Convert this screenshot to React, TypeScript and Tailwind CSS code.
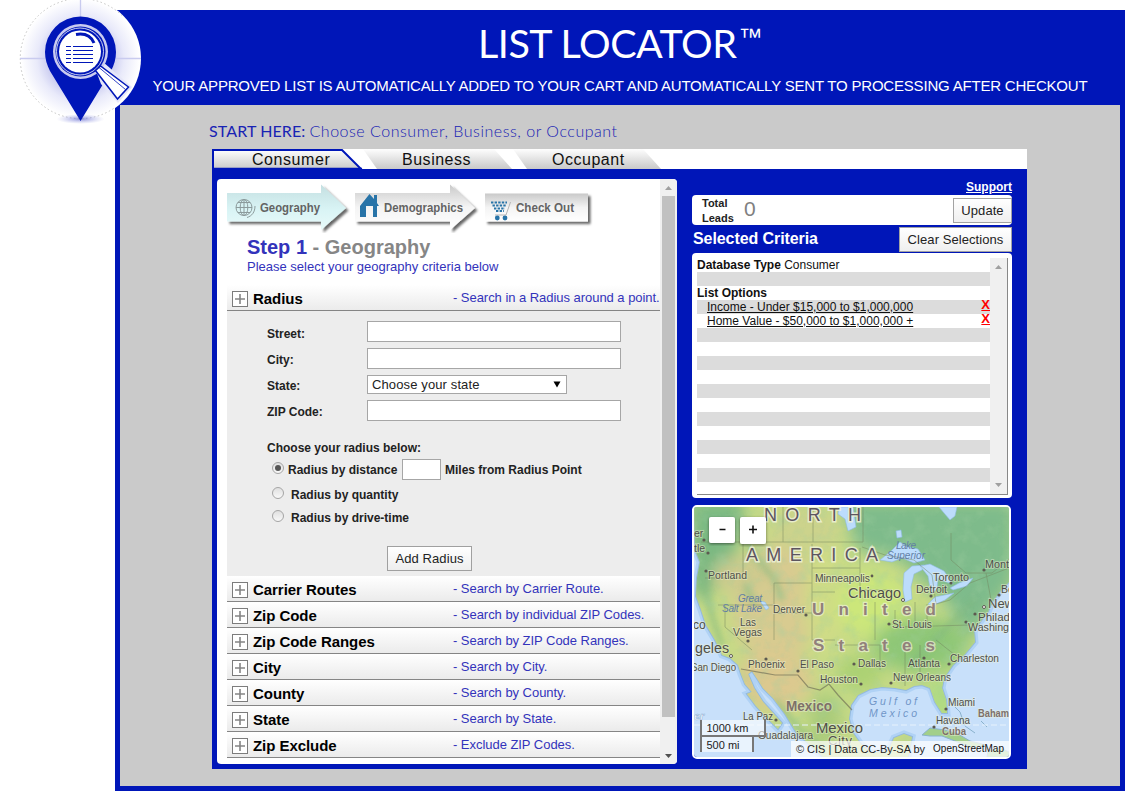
import React from "react";

type Section = { title: string; note: string };

const sections: Section[] = [
  { title: "Carrier Routes", note: "- Search by Carrier Route." },
  { title: "Zip Code", note: "- Search by individual ZIP Codes." },
  { title: "Zip Code Ranges", note: "- Search by ZIP Code Ranges." },
  { title: "City", note: "- Search by City." },
  { title: "County", note: "- Search by County." },
  { title: "State", note: "- Search by State." },
  { title: "Zip Exclude", note: "- Exclude ZIP Codes." },
];

function Logo() {
  return (
    <svg className="absolute left-0 top-0" width="160" height="130" viewBox="0 0 160 130">
      <defs>
        <radialGradient id="halo">
          <stop offset="0.4" stopColor="#b6b8ea" />
          <stop offset="0.72" stopColor="#e9eafa" />
          <stop offset="0.98" stopColor="#ffffff" />
        </radialGradient>
        <radialGradient id="pinShadow">
          <stop offset="0" stopColor="#5a60cc" />
          <stop offset="1" stopColor="#9ea2e6" stopOpacity="0" />
        </radialGradient>
      </defs>
      <circle cx="80.5" cy="58.5" r="60.5" fill="url(#halo)" />
      <path d="M122 15.500A60 60 0 1 0 115 107.500" fill="none" stroke="#c4c4c4" strokeWidth="1" strokeDasharray="1.500 2.500" />
      <path d="M80.500 0V17M20 58.500H46M116 58.500H141" stroke="#c9cbef" strokeWidth="1.300" />
      <ellipse cx="80.500" cy="119" rx="24" ry="5" fill="url(#pinShadow)" opacity="0.700" />
      <path d="M80.500 121L50 71C47 65 45 59 45 52a35.500 35.500 0 0 1 71 0c0 7-2 13-5 19Z" fill="#0016b8" />
      <path d="M95 68L103 62L132 87L118 103L101 84Z" fill="#e6e7f9" />
      <circle cx="80.500" cy="51.500" r="27.500" fill="#c9cbf0" />
      <circle cx="80.500" cy="51.500" r="25" fill="#0016b8" />
      <circle cx="80" cy="51.500" r="23.500" fill="none" stroke="#fff" strokeWidth="0.800" />
      <circle cx="80" cy="51.500" r="21" fill="#fff" />
      <path d="M76 34.500C85 33 91 36 94 43" fill="none" stroke="#0016b8" strokeWidth="3" />
      <path d="M66 46.500h5m2 0h20M66 50.500h5m2 0h20M66 54.500h5m2 0h20M66 58.500h5m2 0h20M66 62.500h5m2 0h20" stroke="#0016b8" strokeWidth="1.200" />
      <path d="M95.500 70.500L100.500 66L128.500 87L117.500 99Z" fill="#fff" stroke="#0016b8" strokeWidth="1.500" />
      <path d="M99 67.500L125.500 89.500" stroke="#0016b8" strokeWidth="0.800" />
    </svg>
  );
}

function Tabs() {
  return (
    <div className="relative h-[20px] bg-white">
      <svg className="absolute left-0 top-0" width="460" height="20" viewBox="0 0 460 20">
        <defs>
          <linearGradient id="tab" x2="0" y2="1">
            <stop offset="0" stopColor="#fefefe" />
            <stop offset="1" stopColor="#c9c9c9" />
          </linearGradient>
        </defs>
        <path d="M1 20V1H130L149 20Z" fill="url(#tab)" stroke="#0016b8" strokeWidth="2" />
        <path d="M0 19.500H150" stroke="#0016b8" strokeWidth="1.500" />
        <path d="M151 0H282L300 20H165Z" fill="url(#tab)" />
        <path d="M301 0H431L449 20H315Z" fill="url(#tab)" />
      </svg>
      <div className="relative flex pt-[1px] text-[16px] leading-[20px] text-[#111]">
        <div className="w-[150px] pl-[40px] tracking-[0.560px]">Consumer</div>
        <div className="w-[150px] pl-[40px] tracking-[0.520px]">Business</div>
        <div className="w-[150px] pl-[40px] tracking-[0.520px]">Occupant</div>
      </div>
    </div>
  );
}

function Steps() {
  return (
    <svg className="block" width="380" height="52" viewBox="222 181 380 52">
      <defs>
        <linearGradient id="teal" x2="0" y2="1">
          <stop offset="0" stopColor="#c4dfe1" />
          <stop offset="0.550" stopColor="#d9f4f5" />
          <stop offset="1" stopColor="#e8fafa" />
        </linearGradient>
        <linearGradient id="grey" x2="0" y2="1">
          <stop offset="0" stopColor="#c9c9c9" />
          <stop offset="0.500" stopColor="#f4f4f4" />
          <stop offset="1" stopColor="#ffffff" />
        </linearGradient>
        <filter id="drop" x="-10%" y="-10%" width="125%" height="135%">
          <feDropShadow dx="2.500" dy="2.500" stdDeviation="1.300" floodColor="#000" floodOpacity="0.600" />
        </filter>
      </defs>
      <path d="M227 193H321V184.500L346 208L321 230V221.500H227Z" fill="url(#teal)" filter="url(#drop)" />
      <path d="M355 193H450V184.500L475 208L450 230V221.500H355Z" fill="url(#grey)" filter="url(#drop)" />
      <path d="M485 193.500H588V221.500H485Z" fill="url(#grey)" filter="url(#drop)" />
      <g fill="none" stroke="#8c9b9c" strokeWidth="1">
        <circle cx="244" cy="207.500" r="8" />
        <ellipse cx="244" cy="207.500" rx="3.800" ry="8" />
        <path d="M244 199V216M236 207.500H252M238 202.500H250M238 212.500H250M247 217.500C252 216 255 212 255 206" />
      </g>
      <path d="M360 206L369.500 194L374 199V195H377V203L379 206H377V217H373V206H366V217H360Z" fill="#2874a8" />
      <path d="M491 202.500H507M492.500 205.500H506M494 208.500H505M496 211H504" stroke="#2874a8" strokeWidth="2.100" strokeDasharray="2.400 1.200" />
      <path d="M510.500 202L506 215H495" fill="none" stroke="#b5b5b5" />
      <circle cx="497.300" cy="218" r="2.400" fill="#2874a8" />
      <circle cx="505" cy="218" r="2.400" fill="#2874a8" />
      <g fontFamily="Liberation Sans, sans-serif" fontWeight="700" fontSize="12" fill="#636363">
        <text x="260" y="212" textLength="60" lengthAdjust="spacingAndGlyphs">Geography</text>
        <text x="384" y="212" textLength="79" lengthAdjust="spacingAndGlyphs">Demographics</text>
        <text x="516" y="212" textLength="58" lengthAdjust="spacingAndGlyphs">Check Out</text>
      </g>
    </svg>
  );
}

function SectionRow({ title, note }: Section) {
  return (
    <div className="flex h-[26px] w-[433px] shrink-0 items-center overflow-hidden whitespace-nowrap border-b border-[#858585] bg-gradient-to-b from-white to-[#ebebeb]">
      <svg className="ml-[5px] mt-[3px] shrink-0" width="16" height="16" viewBox="0 0 16 16">
        <rect x="0.500" y="0.500" width="15" height="15" fill="#fff" stroke="#7c7c7c" />
        <path d="M8 3V13M3 8H13" stroke="#858585" strokeWidth="1.600" />
      </svg>
      <div className="ml-[5px] w-[200px] shrink-0 pt-[2px] text-[15px] font-bold leading-[18px] tracking-[-0.050px] text-black">{title}</div>
      <div className="pt-px text-[13px] tracking-[-0.040px] text-[#3333bb]">{note}</div>
    </div>
  );
}

function Radio({ on = false }: { on?: boolean }) {
  return (
    <span className="flex size-[12px] shrink-0 items-center justify-center rounded-full border border-[#a5a5a5] bg-gradient-to-b from-[#e0e0e0] to-[#f8f8f8]">
      {on && <span className="size-[6px] rounded-full bg-[#555]" />}
    </span>
  );
}

function RadiusForm() {
  const box = "h-[21px] w-[254px] border border-[#a6a6a6] bg-white";
  const label = "w-[100px]";
  return (
    <div className="h-[265px] w-[433px] shrink-0 bg-[#ededed] pl-[40px] pt-[10px] text-[12px] font-bold text-[#222]">
      <div className="flex h-[26px] items-start"><span className={label + " pt-[4px]"}>Street:</span><span className={box} /></div>
      <div className="flex h-[26px] items-start"><span className={label + " pt-[4px]"}>City:</span><span className={box + " mt-px"} /></div>
      <div className="flex h-[26px] items-start">
        <span className={label + " pt-[4px]"}>State:</span>
        <span className="mt-[2px] flex h-[19px] w-[200px] items-center justify-between border border-[#a6a6a6] bg-white pl-[4px] pr-[5px] text-[13px] font-normal text-[#222]">
          <span className="tracking-[0.120px]">Choose your state</span>
          <svg width="8" height="7" viewBox="0 0 8 7"><path d="M0.500 0.500H7.500L4 6.500Z" fill="#000" /></svg>
        </span>
      </div>
      <div className="flex h-[26px] items-start"><span className={label + " pt-[4px]"}>ZIP Code:</span><span className={box + " mt-px"} /></div>
      <div className="mt-[11px] h-[22px] pt-[3px]">Choose your radius below:</div>
      <div className="flex h-[22px] items-center pl-[5px]">
        <span className="-mt-[2px]"><Radio on /></span>
        <span className="ml-[4px] w-[114px] pt-[2px]">Radius by distance</span>
        <span className="h-[21px] w-[39px] border border-[#a6a6a6] bg-white" />
        <span className="ml-[4px] pt-px">Miles from Radius Point</span>
      </div>
      <div className="mt-[2px] flex h-[22px] items-center pl-[5px]"><Radio /><span className="ml-[7px] pt-[4px]">Radius by quantity</span></div>
      <div className="mt-px flex h-[22px] items-center pl-[5px]"><Radio /><span className="ml-[7px] pt-[4px]">Radius by drive-time</span></div>
      <div className="ml-[120px] mt-[19px] flex h-[25px] w-[85px] items-center justify-center border border-[#a0a0a0] bg-gradient-to-b from-white to-[#eee] text-[13px] font-normal tracking-[0.100px] text-[#222]">Add Radius</div>
    </div>
  );
}

function Caret({ down = false, color }: { down?: boolean; color: string }) {
  return (
    <svg className={down ? "rotate-180" : ""} width="7" height="4" viewBox="0 0 7 4"><path d="M0 4L3.500 0L7 4Z" fill={color} /></svg>
  );
}

type Place = [string, number, number, number];
const places: Place[] = [
  ["Portland", 708, 579, 39], ["Minneapolis", 815, 582, 55], ["Denver", 773, 613, 32], ["Toronto", 933, 581, 36],
  ["Detroit", 916, 593, 31], ["St. Louis", 892, 628, 40], ["Las", 740, 626, 16], ["Vegas", 733, 636, 29],
  ["Phoenix", 748, 668, 37], ["El Paso", 800, 668, 34], ["Dallas", 858, 667, 28], ["Atlanta", 908, 667, 32],
  ["Charleston", 950, 662, 49], ["New Orleans", 893, 681, 58], ["Miami", 948, 706, 27], ["Havana", 936, 724, 34],
  ["La Paz", 743, 720, 30], ["Guadalajara", 758, 739, 55], ["San Diego", 691, 671, 45], ["Houston", 820, 683, 38],
];

function Land() {
  return (
    <path d="M694 507H1009V582L1001 590L992 602L988 612L980 622L974 631L975 642L965 654L953 665L944 678L942 688L946 700L947 713L942 713L935 702L930 688L922 685L914 686L906 690L895 688L882 687L870 689L858 695L851 705L849 719L853 733L860 743L870 753L888 751L894 738L904 734L912 737L908 757H823L812 747L796 732L785 714L773 698L763 688L758 680L752 671L748 674L754 688L763 702L774 714L782 723L778 729L768 719L756 706L747 694L752 692L745 684L741 674L738 665L730 658L722 655L715 640L706 625L701 610L696 596L697 578L700 562L695 550Z" />
  );
}

function MapView() {
  return (
    <svg className="block" width="315" height="250" viewBox="694 507 315 250" fontFamily="Liberation Sans, sans-serif">
      <defs>
        <filter id="soft" x="-30%" y="-30%" width="160%" height="160%"><feGaussianBlur stdDeviation="8" /></filter>
        <filter id="soft4" x="-30%" y="-30%" width="160%" height="160%"><feGaussianBlur stdDeviation="3" /></filter>
        <filter id="relief" x="0" y="0" width="100%" height="100%">
          <feTurbulence type="fractalNoise" baseFrequency="0.070" numOctaves="4" seed="7" />
          <feColorMatrix values="0 0 0 0 0.350  0 0 0 0 0.620  0 0 0 0 0.350  2.200 0 0 0 -1" />
        </filter>
        <filter id="btn"><feDropShadow dx="0" dy="1" stdDeviation="1.500" floodOpacity="0.500" /></filter>
        <clipPath id="landClip"><Land /></clipPath>
      </defs>
      <rect x="694" y="507" width="315" height="250" fill="#c8e0fa" />
      <g fill="none" stroke="#b0d2f5" strokeWidth="7"><Land /></g>
      <g fill="none" stroke="#94b9dd" strokeWidth="2"><Land /></g>
      <g fill="#c6da86"><Land /></g>
      <g clipPath="url(#landClip)">
        <g filter="url(#soft)">
          <path d="M690 500H745L735 560L705 600L690 590Z" fill="#7ab983" />
          <path d="M845 500H1015V580L970 640L945 600L900 560L855 548Z" fill="#7ebb8b" />
          <ellipse cx="775" cy="605" rx="42" ry="60" fill="#d8cb90" />
          <ellipse cx="740" cy="575" rx="28" ry="18" fill="#cdca8e" />
          <ellipse cx="775" cy="680" rx="38" ry="30" fill="#dcc98f" />
          <ellipse cx="825" cy="600" rx="20" ry="55" fill="#cfdc86" />
          <ellipse cx="872" cy="605" rx="35" ry="32" fill="#cce77a" />
          <ellipse cx="805" cy="530" rx="35" ry="22" fill="#ccd38c" />
          <ellipse cx="920" cy="645" rx="48" ry="28" fill="#8fc777" />
          <ellipse cx="860" cy="672" rx="22" ry="18" fill="#acd173" />
          <ellipse cx="825" cy="720" rx="16" ry="28" fill="#a9cb7a" />
          <ellipse cx="940" cy="700" rx="14" ry="22" fill="#aedb82" />
        </g>
        <g filter="url(#soft4)" fill="none" stroke="#7fb87f" strokeWidth="5" opacity="0.650">
          <path d="M735 510L745 540L760 562L775 580L782 600M706 545L705 590L713 620L722 645M775 700L800 730L825 750M910 665L940 635L975 600M745 585L755 605" />
        </g>
        <rect x="694" y="507" width="315" height="250" filter="url(#relief)" opacity="0.380" />
      </g>
      <g fill="#a2cf8a" stroke="#8ab2cd" strokeWidth="1">
        <path d="M922 735L930 728L945 730L958 734L970 741L986 745L972 748L955 741L942 736L930 736Z" />
        <path d="M988 751L1000 748L1009 752V757H987Z" />
        <path d="M955 707L960 712L965 726L975 733M981 721L987 727" fill="none" />
      </g>
      <g fill="#bcdcfc" stroke="#8fbce2" strokeWidth="0.600">
        <path d="M880 560L891 551L900 542L906 546L918 549L925 560L914 563L902 558L892 562Z" />
        <path d="M904 573L912 566L924 565L922 570L914 574L911 587L912 599L905 602L903 590Z" />
        <path d="M920 566L930 564L944 571L953 584L943 581L938 578L937 589L931 594L928 576Z" />
        <path d="M950 588L959 583L973 578L967 586L953 590Z" />
        <path d="M928 604L935 597L954 593L945 600L932 606Z" />
        <path d="M939 507H957L955 516L950 520L944 513ZM839 507H853L856 527L848 531L845 519L838 514ZM896 531L901 530L902 537L897 538Z" />
        <path d="M760 601L765 602L769 608L766 610Z" />
      </g>
      <g fill="none" stroke="#74875f" strokeWidth="0.800" opacity="0.600">
        <path d="M701 542H863V507M862 547L885 555L914 560L932 575L936 604L950 600L970 583L1009 568M743 542V573M705 578H743M718 605H774V583H812M812 568H860M812 544V613M725 606V627L752 650M774 605V640M774 613H812V640H835M812 592H835M783 507V542M813 507V542M860 548V595M860 590H892M875 602V640M835 645H880V670M905 640V686M920 645V682M936 640L955 655M900 627L970 625M895 610V625M915 602V623M927 604V622M951 533V560L966 573H992L1009 559M986 573L992 605" />
        <path d="M741 669L775 675H798L808 687L820 690L829 684L838 695L852 710" stroke="#656450" strokeWidth="1.200" />
      </g>
      <path d="M694 725H1009" stroke="#e7f2fc" strokeDasharray="6 3" />
      <g fill="#5d5a50">
        <circle cx="706" cy="571" r="1.600" /><circle cx="872" cy="576" r="1.400" /><circle cx="806" cy="615" r="1.600" /><circle cx="951" cy="583" r="1.600" /><circle cx="931" cy="596" r="1.600" /><circle cx="889" cy="624" r="1.600" /><circle cx="748" cy="641" r="1.600" /><circle cx="766" cy="659" r="1.600" /><circle cx="798" cy="671" r="1.600" /><circle cx="854" cy="664" r="1.600" /><circle cx="924" cy="658" r="1.600" /><circle cx="949" cy="664" r="1.600" /><circle cx="891" cy="683" r="1.600" /><circle cx="861" cy="684" r="1.600" /><circle cx="946" cy="709" r="1.600" /><circle cx="934" cy="727" r="1.600" /><circle cx="776" cy="720" r="1.600" /><circle cx="984" cy="570" r="1.600" /><circle cx="999" cy="595" r="1.600" /><circle cx="975" cy="614" r="1.600" /><circle cx="966" cy="622" r="1.600" /><circle cx="704" cy="540" r="1.600" /><circle cx="708" cy="553" r="1.600" />
      </g>
      <g fill="#fff" stroke="#5d5a50"><circle cx="903" cy="600" r="1.500" /><circle cx="731" cy="656" r="1.500" /><circle cx="984" cy="607" r="1.500" /></g>
      <g stroke="#eef1d8" strokeOpacity="0.450" strokeWidth="1.800" paintOrder="stroke" fill="#4f4f49">
        <g fontSize="18" strokeWidth="3" strokeOpacity="0.850" fill="#5d5560" fontWeight="400">
          <text x="764" y="521" textLength="97">NORTH</text>
          <text x="746" y="561" textLength="132">AMERICA</text>
        </g>
        <g fontSize="17" fontWeight="700" fill="#91807b" strokeWidth="2.500" strokeOpacity="0.700">
          <text x="812" y="615" textLength="124">United</text>
          <text x="813" y="651" textLength="122">States</text>
        </g>
        {places.map(([name, x, y, w]) => (
          <text key={name} x={x} y={y} textLength={w} lengthAdjust="spacingAndGlyphs" fontSize="10.500">{name}</text>
        ))}
        <g fontSize="14">
          <text x="848" y="598" textLength="53" lengthAdjust="spacingAndGlyphs">Chicago</text>
          <text x="695" y="653" textLength="34" lengthAdjust="spacingAndGlyphs">geles</text>
          <text x="988" y="608" fontSize="13">New</text>
        </g>
        <text x="978" y="621" fontSize="11.500">Philad</text>
        <text x="968" y="631" fontSize="10.500" textLength="41" lengthAdjust="spacingAndGlyphs">Washing</text>
        <text x="985" y="568" fontSize="10.500" textLength="24" lengthAdjust="spacingAndGlyphs">Mont</text>
        <text x="1001" y="593" fontSize="10.500">Bo</text>
        <text x="694" y="537" fontSize="10.500">er</text>
        <text x="694" y="552" fontSize="10.500">tle</text>
        <text x="693" y="629" fontSize="12">co</text>
        <g fontWeight="700" fill="#7e7069">
          <text x="786" y="711" fontSize="14" textLength="46" lengthAdjust="spacingAndGlyphs">Mexico</text>
          <text x="978" y="717" fontSize="10.500" textLength="31" lengthAdjust="spacingAndGlyphs">Baham</text>
          <text x="942" y="735" fontSize="10.500" textLength="24" lengthAdjust="spacingAndGlyphs">Cuba</text>
        </g>
        <text x="816" y="733" fontSize="14" textLength="47" lengthAdjust="spacingAndGlyphs">Mexico</text>
        <text x="828" y="745" fontSize="13" textLength="24">City</text>
      </g>
      <g fontStyle="italic" fill="#627ea4" fontSize="10">
        <text x="738" y="602" textLength="24">Great</text><text x="722" y="612" textLength="40">Salt Lake</text>
        <text x="896" y="549" textLength="20">Lake</text><text x="887" y="559" textLength="38">Superior</text>
        <g fill="#7096c8" fontSize="10.500"><text x="869" y="705" textLength="48">Gulf of</text><text x="869" y="717" textLength="48">Mexico</text></g>
        <text x="694" y="720" fontSize="11" fill="#fff" fontWeight="700" stroke="#8caed4" strokeWidth="0.500">er</text>
      </g>
      <rect x="709" y="517" width="26" height="26" rx="2" fill="#fff" filter="url(#btn)" />
      <rect x="740" y="517" width="26" height="27" rx="2" fill="#fff" filter="url(#btn)" />
      <path d="M719.500 529.500H725.500M749 529.500H757M753 525.500V533.500" stroke="#111" strokeWidth="1.600" />
      <rect x="700" y="720" width="65" height="15" fill="#fff" fillOpacity="0.600" />
      <rect x="700" y="736" width="53" height="16" fill="#fff" fillOpacity="0.600" />
      <path d="M701 720V752M700 736H765V720M753 736V752" fill="none" stroke="#777" strokeWidth="2" />
      <g fontSize="11" fill="#222"><text x="706.500" y="732" textLength="42">1000 km</text><text x="706.500" y="749" textLength="33">500 mi</text></g>
      <rect x="791" y="741" width="218" height="16" fill="#fff" fillOpacity="0.720" />
      <g fontSize="11" fill="#222"><text x="796" y="753" textLength="129">© CIS | Data CC-By-SA by</text><text x="933" y="752" fontSize="10" fill="#111" textLength="71">OpenStreetMap</text></g>
    </svg>
  );
}

const actionButton = "flex h-[25px] items-center justify-center whitespace-nowrap border border-[#a3a3a3] bg-gradient-to-b from-white to-[#efefef] text-[13px] tracking-[0.070px] text-[#222]";

function Criterion({ text, striped }: { text: string; striped?: boolean }) {
  return (
    <div className={"flex h-[14px] justify-between pl-[10px] leading-[14px] " + (striped ? "bg-[#dcdcdc]" : "bg-white")}>
      <span className="underline">{text}</span>
      <span className="-mt-[2px] text-[13px] font-bold leading-[14px] text-[#f00] underline">X</span>
    </div>
  );
}

function Summary() {
  return (
    <aside className="ml-[15px] flex w-[320px] flex-col pt-[9px]">
      <a className="h-[17px] self-end text-[12px] font-bold leading-[18px] text-white underline">Support</a>
      <div className="flex h-[30px] items-center rounded-[4px] bg-white">
        <div className="w-[52px] pl-[10px] pt-[2px] text-[11px] font-bold leading-[15px] text-[#222]">Total<br />Leads</div>
        <div className="grow pb-[3px] text-[21px] leading-none text-[#808080]">0</div>
        <div className={actionButton + " w-[59px] mt-px"}>Update</div>
      </div>
      <div className="flex h-[28px] items-start justify-between pt-[2px]">
        <h2 className="pl-px pt-[1px] text-[16px] font-bold leading-[21px] tracking-[-0.080px] text-white">Selected Criteria</h2>
        <div className={actionButton + " w-[113px]"}>Clear Selections</div>
      </div>
      <div className="flex h-[245px] rounded-[4px] bg-white pb-[3px] pl-[5px] pr-[4px] pt-[5px]">
        <div className="flex grow border-b border-r border-[#888]">
          <div className="w-[293px] overflow-hidden text-[12px] leading-[14px] text-[#111]">
            <div className="h-[14px]"><b>Database Type</b> Consumer</div>
            <div className="h-[14px] bg-[#dcdcdc]" />
            <div className="h-[14px] font-bold">List Options</div>
            <Criterion text="Income - Under $15,000 to $1,000,000" striped />
            <Criterion text="Home Value - $50,000 to $1,000,000 +" />
            {Array.from({ length: 11 }, (_, i) => (
              <div key={i} className={"h-[14px] " + (i % 2 ? "bg-white" : "bg-[#dcdcdc]")} />
            ))}
          </div>
          <div className="flex grow flex-col items-center justify-between bg-[#f0f0f0] py-[7px]">
            <Caret color="#a0a0a0" /><Caret down color="#a0a0a0" />
          </div>
        </div>
      </div>
      <div className="mt-[7px] h-[254px] w-[319px] overflow-hidden rounded-[5px] border-2 border-white"><MapView /></div>
    </aside>
  );
}

export default function App() {
  return (
    <div className="relative h-[798px] w-[1148px] overflow-hidden bg-white pl-[115px] pt-[10px] font-['Liberation_Sans',Arial,sans-serif]">
      <main className="flex h-[781px] w-[1010px] flex-col border-x-[5px] border-b-[5px] border-[#0016b8] bg-[#cacaca]">
        <header className="-mx-[5px] h-[95px] shrink-0 bg-[#0016b8] text-center text-white">
          <h1 className="flex h-[66px] items-start justify-center pt-[9px] font-['Lato',sans-serif] text-[39.500px] leading-[48px] tracking-[-0.500px]">
            LIST LOCATOR<span className="ml-[2px] pt-[4px] font-['Liberation_Sans',sans-serif] text-[24px] leading-[28px] tracking-[-0.500px]">™</span>
          </h1>
          <p className="whitespace-nowrap text-[15px] leading-[20px] tracking-[-0.195px]">YOUR APPROVED LIST IS AUTOMATICALLY ADDED TO YOUR CART AND AUTOMATICALLY SENT TO PROCESSING AFTER CHECKOUT</p>
        </header>
        <div className="pl-[89px] pt-[14px] font-['Lato',sans-serif] text-[16px] leading-[24px] text-[#1823b4]">
          <span className="tracking-[0.100px]">START HERE:</span> <span className="font-light tracking-[0.520px]">Choose Consumer, Business, or Occupant</span>
        </div>
        <div className="ml-[92px] mt-[6px] w-[815px]">
          <Tabs />
          <div className="flex h-[600px] bg-[#0016b8] pl-[5px]">
            <section className="mt-[10px] flex h-[585px] w-[460px] overflow-hidden rounded-[4px] bg-white">
              <div className="flex w-[443px] flex-col overflow-hidden pl-[10px]">
                <div className="-ml-[5px] mt-[2px] h-[54px] shrink-0"><Steps /></div>
                <h2 className="ml-[20px] h-[24px] shrink-0 text-[20px] font-bold leading-[24px] text-[#868686]"><span className="text-[#3333bb]">Step 1</span> - Geography</h2>
                <p className="ml-[20px] h-[26px] shrink-0 text-[13px] leading-[16px] text-[#3333bb]">Please select your geography criteria below</p>
                <SectionRow title="Radius" note="- Search in a Radius around a point." />
                <RadiusForm />
                {sections.map((s) => <SectionRow key={s.title} {...s} />)}
              </div>
              <div className="flex w-[17px] flex-col items-center bg-[#f0f0f0]">
                <div className="flex h-[17px] items-center"><Caret color="#a0a0a0" /></div>
                <div className="h-[521px] w-[13px] bg-[#c1c1c1]" />
                <div className="mt-auto flex h-[17px] items-center"><Caret down color="#505050" /></div>
              </div>
            </section>
            <Summary />
          </div>
        </div>
      </main>
      <Logo />
    </div>
  );
}
